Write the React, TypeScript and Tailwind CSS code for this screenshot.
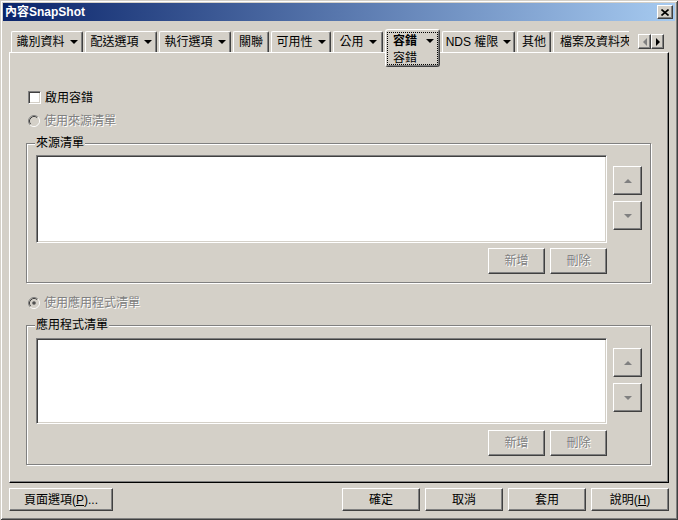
import type { ReactNode } from 'react'

const raised =
  'border border-t-white border-l-white border-r-[#404040] border-b-[#404040] shadow-[inset_-1px_-1px_0_#808080]'
const disabledText = 'text-[#808080] [text-shadow:1px_1px_0_#fff]'

function DownArrow({ color = 'border-t-black' }: { color?: string }) {
  return <span className={`inline-block h-0 w-0 border-x-[4px] border-t-[4px] border-x-transparent ${color}`} />
}

function Tab({ label, arrow, width }: { label: string; arrow?: boolean; width: string }) {
  return (
    <div
      className={`mt-[2px] flex h-[21px] shrink-0 items-center justify-center gap-[5px] whitespace-nowrap rounded-t-[2px] border-x border-t border-t-white border-l-white border-r-[#404040] shadow-[inset_-1px_0_0_#808080] ${width}`}
    >
      <span className="leading-[12px]">{label}</span>
      {arrow && <DownArrow />}
    </div>
  )
}

function Button({ children, className, disabled }: { children: ReactNode; className: string; disabled?: boolean }) {
  return (
    <div className={`flex items-center justify-center ${raised} ${disabled ? disabledText : 'text-black'} ${className}`}>
      <span className="leading-[12px]">{children}</span>
    </div>
  )
}

function Radio({ checked }: { checked?: boolean }) {
  return (
    <svg width="12" height="12" viewBox="0 0 12 12" className="shrink-0">
      <circle cx="6" cy="6" r="4.5" fill="#d4d0c8" />
      <path d="M9.89 2.11 A5.5 5.5 0 0 0 2.11 9.89" stroke="#808080" fill="none" />
      <path d="M9.89 2.11 A5.5 5.5 0 0 1 2.11 9.89" stroke="#ffffff" fill="none" />
      <path d="M9.18 2.82 A4.5 4.5 0 0 0 2.82 9.18" stroke="#404040" fill="none" />
      <path d="M9.18 2.82 A4.5 4.5 0 0 1 2.82 9.18" stroke="#d4d0c8" fill="none" />
      {checked && <circle cx="6" cy="6" r="1.8" fill="#505050" />}
    </svg>
  )
}

function UpDown({ offset }: { offset: string }) {
  return (
    <div className={`ml-[6px] flex flex-col gap-[6px] ${offset}`}>
      <div className={`flex h-[29px] w-[29px] items-center justify-center ${raised}`}>
        <span className="inline-block h-0 w-0 border-x-[4px] border-b-[4px] border-x-transparent border-b-[#808080]" />
      </div>
      <div className={`flex h-[29px] w-[29px] items-center justify-center ${raised}`}>
        <DownArrow color="border-t-[#808080]" />
      </div>
    </div>
  )
}

function ListGroup({
  label,
  padTop,
  listH,
  arrowOffset,
  btnGap,
}: {
  label: string
  padTop: string
  listH: string
  arrowOffset: string
  btnGap: string
}) {
  return (
    <div
      className={`relative flex h-[140px] w-[625px] items-start border border-[#808080] pl-[9px] shadow-[inset_1px_1px_0_#fff,1px_1px_0_#fff] ${padTop}`}
    >
      <span className="absolute left-[8px] top-[-7px] bg-[#d4d0c8] px-[1px] leading-[12px] text-black">{label}</span>
      <div className="flex w-[571px] flex-col">
        <div
          className={`w-[571px] border border-t-[#808080] border-l-[#808080] border-b-white border-r-white bg-white shadow-[inset_1px_1px_0_#404040,inset_-1px_-1px_0_#d4d0c8] ${listH}`}
        />
        <div className={`flex justify-end gap-[5px] ${btnGap}`}>
          <Button className="h-[26px] w-[57px]" disabled>
            新增
          </Button>
          <Button className="h-[26px] w-[57px]" disabled>
            刪除
          </Button>
        </div>
      </div>
      <UpDown offset={arrowOffset} />
    </div>
  )
}

export default function App() {
  return (
    <div className="h-[520px] w-[678px] bg-[#d4d0c8] p-[3px] font-['Liberation_Sans','Noto_Sans_CJK_TC',sans-serif] text-[12px] text-black shadow-[inset_1px_1px_0_#d4d0c8,inset_-1px_-1px_0_#404040,inset_2px_2px_0_#fff,inset_-2px_-2px_0_#808080]">
      {/* title bar */}
      <div className="flex h-[18px] items-center justify-between bg-[linear-gradient(to_right,#0a246a,#a6caf0)] pl-[2px] pr-[2px]">
        <span className="font-bold leading-[12px] text-white">內容SnapShot</span>
        <div className={`flex h-[14px] w-[16px] items-center justify-center bg-[#d4d0c8] ${raised}`}>
          <svg width="8" height="7" viewBox="0 0 8 7">
            <path d="M0.5 0.5 L7.5 6.5 M7.5 0.5 L0.5 6.5" stroke="#000" strokeWidth="1.6" />
          </svg>
        </div>
      </div>

      <div className="px-[6px] pt-[8px]">
        {/* tab strip */}
        <div className="flex h-[23px] items-start gap-[2px] pl-[2px]">
          <Tab label="識別資料" arrow width="w-[72px]" />
          <Tab label="配送選項" arrow width="w-[72px]" />
          <Tab label="執行選項" arrow width="w-[72px]" />
          <Tab label="關聯" width="w-[36px]" />
          <Tab label="可用性" arrow width="w-[60px]" />
          <Tab label="公用" arrow width="w-[50px]" />
          <div className="relative z-10 h-[38px] w-[55px] shrink-0 rounded-[3px] border border-t-white border-l-white border-r-[#404040] border-b-[#404040] bg-[#d4d0c8] pt-[5px] shadow-[inset_-1px_-1px_0_#808080]">
            <div className="absolute bottom-[1px] left-[1px] right-[1px] top-[2px] border border-dotted border-black" />
            <div className="flex items-center justify-between pl-[7px] pr-[5px]">
              <span className="font-bold leading-[12px]">容錯</span>
              <DownArrow />
            </div>
            <div className="mt-[5px] pl-[7px] leading-[12px]">容錯</div>
          </div>
          <Tab label="NDS 權限" arrow width="w-[73px]" />
          <Tab label="其他" width="w-[34px]" />
          <div className="mt-[2px] flex h-[21px] w-[76px] shrink-0 items-center overflow-hidden whitespace-nowrap rounded-tl-[2px] border-l border-t border-t-white border-l-white pl-[6px]">
            <span className="leading-[12px]">檔案及資料夾</span>
          </div>
          <div className="ml-[7px] mt-[5px] flex">
            <div className={`flex h-[15px] w-[13px] items-center justify-center ${raised}`}>
              <span className="inline-block h-0 w-0 border-y-[4px] border-r-[4px] border-y-transparent border-r-[#808080]" />
            </div>
            <div className={`flex h-[15px] w-[13px] items-center justify-center ${raised}`}>
              <span className="inline-block h-0 w-0 border-y-[4px] border-l-[4px] border-y-transparent border-l-black" />
            </div>
          </div>
        </div>

        {/* tab page */}
        <div className="h-[431px] border border-t-white border-l-white border-r-black border-b-black pl-[16px] shadow-[inset_-1px_-1px_0_#808080]">
          <div className="ml-[2px] mt-[38px] flex h-[13px] items-center gap-[4px]">
            <div className="h-[13px] w-[13px] border border-t-[#808080] border-l-[#808080] border-b-white border-r-white bg-white shadow-[inset_1px_1px_0_#404040,inset_-1px_-1px_0_#d4d0c8]" />
            <span className="leading-[12px]">啟用容錯</span>
          </div>
          <div className="ml-[2px] mt-[11px] flex h-[12px] items-center gap-[4px]">
            <Radio />
            <span className={`leading-[12px] ${disabledText}`}>使用來源清單</span>
          </div>
          <div className="mt-[16px]">
            <ListGroup label="來源清單" padTop="pt-[11px]" listH="h-[88px]" arrowOffset="mt-[11px]" btnGap="mt-[5px]" />
          </div>
          <div className="ml-[2px] mt-[14px] flex h-[12px] items-center gap-[4px]">
            <Radio checked />
            <span className={`leading-[12px] ${disabledText}`}>使用應用程式清單</span>
          </div>
          <div className="mt-[16px]">
            <ListGroup label="應用程式清單" padTop="pt-[12px]" listH="h-[86px]" arrowOffset="mt-[10px]" btnGap="mt-[6px]" />
          </div>
        </div>

        {/* dialog buttons */}
        <div className="mt-[5px] flex justify-between">
          <Button className="h-[23px] w-[104px]">
            頁面選項(<span className="underline">P</span>)...
          </Button>
          <div className="flex gap-[5px]">
            <Button className="h-[23px] w-[78px]">確定</Button>
            <Button className="h-[23px] w-[78px]">取消</Button>
            <Button className="h-[23px] w-[78px]">套用</Button>
            <Button className="h-[23px] w-[78px]">
              說明(<span className="underline">H</span>)
            </Button>
          </div>
        </div>
      </div>
    </div>
  )
}
